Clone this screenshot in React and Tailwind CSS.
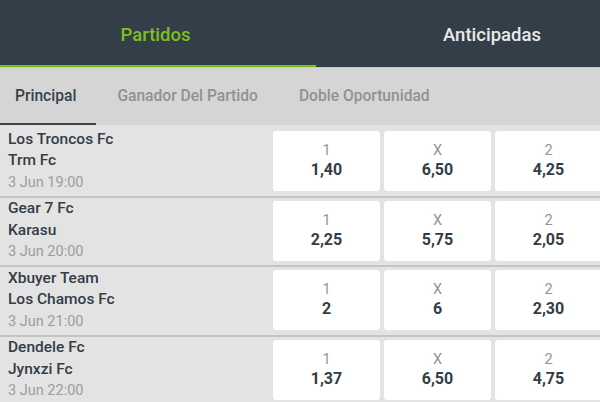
import React from "react";

const matches = [
  { a: "Los Troncos Fc", b: "Trm Fc", d: "3 Jun 19:00", o: ["1,40", "6,50", "4,25"] },
  { a: "Gear 7 Fc", b: "Karasu", d: "3 Jun 20:00", o: ["2,25", "5,75", "2,05"] },
  { a: "Xbuyer Team", b: "Los Chamos Fc", d: "3 Jun 21:00", o: ["2", "6", "2,30"] },
  { a: "Dendele Fc", b: "Jynxzi Fc", d: "3 Jun 22:00", o: ["1,37", "6,50", "4,75"] },
];

const labels = ["1", "X", "2"];

export default function App() {
  return (
    <div
      className="w-[600px] h-[402px] overflow-hidden bg-[#e3e3e3]"
      style={{ fontFamily: "Roboto, 'Noto Sans', sans-serif" }}
    >
      {/* Top tabs */}
      <div className="flex h-[67px] bg-[#333e48]">
        <div className="w-[316px] h-full flex items-center justify-center pr-[5px] pt-[6px] border-b-[2px] border-[#7bbd1c]">
          <span className="text-[18.5px] font-medium text-[#7dc01f] leading-none">Partidos</span>
        </div>
        <div className="flex-1 h-full flex items-center pl-[127px] pt-[6px] pb-[2px]">
          <span className="text-[18.5px] font-medium text-[#e8eaeb] leading-none">Anticipadas</span>
        </div>
      </div>
      {/* Sub tabs */}
      <div className="flex h-[58px] bg-[#d5d5d5] border-t border-[#c9c9c9]">
        <div className="h-full flex items-center pl-[15px] pr-[20px] border-b-[2.5px] border-[#37424b] pt-[3px]">
          <span className="text-[15.6px] font-medium text-[#37424b]">Principal</span>
        </div>
        <div className="h-full flex items-center pl-[21px] pr-[20px] pb-[2.5px] pt-[3px]">
          <span className="text-[15.6px] font-medium text-[#8d9297]">Ganador Del Partido</span>
        </div>
        <div className="h-full flex items-center pl-[21px] pr-[20px] pb-[2.5px] pt-[3px]">
          <span className="text-[15.6px] font-medium text-[#8d9297]">Doble Oportunidad</span>
        </div>
      </div>
      {/* Matches */}
      <div className="pt-[3px]">
        {matches.map((m, i) => (
          <div key={i} className="flex h-[69.5px] border-b-2 border-[#c4c4c4]">
            <div className="w-[273px] shrink-0 pl-[8px] pt-[0.5px] flex flex-col">
              <span className="text-[15.5px] leading-[21.5px] font-medium text-[#333d47]">{m.a}</span>
              <span className="text-[15.5px] leading-[21.5px] font-medium text-[#333d47]">{m.b}</span>
              <span className="text-[14.5px] leading-[21.5px] text-[#999da1]">{m.d}</span>
            </div>
            <div className="flex gap-[4px] pt-[3px]">
              {m.o.map((v, j) => (
                <div
                  key={j}
                  className="w-[107px] h-[60px] shrink-0 bg-white rounded-[3px] flex flex-col items-center justify-center"
                >
                  <span className="text-[14.5px] leading-[18px] text-[#8e9499]">{labels[j]}</span>
                  <span className="text-[16px] leading-[20px] font-bold text-[#333d47]">{v}</span>
                </div>
              ))}
            </div>
          </div>
        ))}
      </div>
    </div>
  );
}
